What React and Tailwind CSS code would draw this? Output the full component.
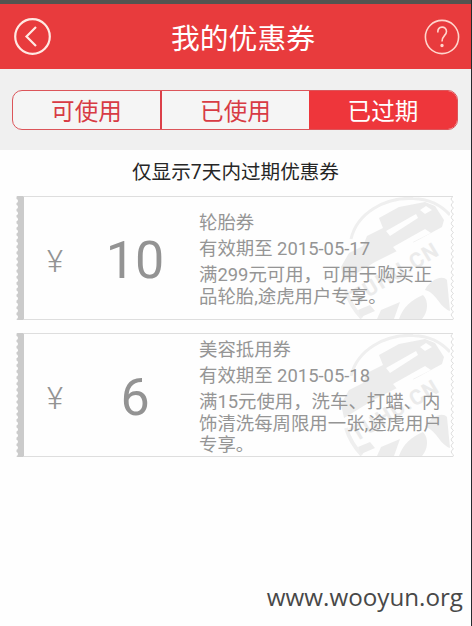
import React from 'react';

const sans = "font-['Roboto','Noto_Sans_CJK_SC',sans-serif]";

function Stamp() {
  return (
    <svg className="absolute right-[4px] top-0 h-[122px] w-[115px]" viewBox="335 198 115 122">
      <g fill="none" stroke="#efefef">
        <path d="M350 240 C356 214 384 198 412 199.5 C428 200 440 206 449 216" strokeWidth="3" />
        <path d="M345 292 Q350 308 361 319" strokeWidth="4" />
      </g>
      <g fill="#ececec">
        <path d="M378 219 L398 208 L424 203 L434 207 L443 221 L441 228 L419 240 L400 250 L374 263 L343 282 L340 268 L348 254 L362 247 L366 237 L382 229Z" />
        <path d="M424 291 C428 282 441 275 446 281 L449 312 C438 308 436 294 424 291Z" />
        <path d="M398 320 C402 308 410 301 422 296 C428 302 427 313 421 320Z" />
        <path d="M376 320 L380 311 L399 303 L393 320Z" />
        <path d="M357 311 L369 306 L374 312 L360 318Z" />
      </g>
      <path d="M385 232 L415 215 L417 219 L389 237ZM392 248 L424 230 L430 234 L412 243 L415 247 L397 254ZM419 211 L425 207 L431 211 L424 215Z" fill="#fefefe" />
      <text transform="translate(355 306) rotate(-31)" fill="#ebebeb" fontSize="21" fontWeight="700" className="font-['Roboto',sans-serif]" textLength="98">TUHU.CN</text>
    </svg>
  );
}

function LeftEdge() {
  return (
    <svg className="h-full w-2 shrink-0" viewBox="0 0 8 124">
      <rect x="0.5" width="7.5" height="124" rx="1" fill="#cbcbcb" />
      {Array.from({ length: 20 }, (_, i) => (
        <circle key={i} cx="0" cy={5 + i * 6.1} r="2" fill="#fff" />
      ))}
    </svg>
  );
}

function RightEdge() {
  return (
    <svg className="absolute right-0 top-0 h-full w-[6px]" viewBox="0 0 6 124">
      <rect x="1" width="5" height="124" fill="#fff" />
      <path
        d={'M0 .5 H4 ' + Array.from({ length: 20 }, (_, i) => `Q0 ${3 + i * 6.1} 4.5 ${6 + i * 6.1}`).join(' ') + ' L4 123.5 H0'}
        fill="none"
        stroke="#dedede"
      />
    </svg>
  );
}

function Coupon({ amount, title, date, lines }) {
  return (
    <article className="relative flex h-[124px] w-[439px]">
      <LeftEdge />
      <div className="relative flex flex-1 border-y border-[#dedede]">
        <Stamp />
        <div className="relative flex w-[175px] items-center pt-[6px] text-[#939393]">
          <span className="ml-[18px] w-[26px] pt-[3px] text-center text-[31px] font-light">¥</span>
          <span className="ml-[17px] w-[100px] text-center text-[52px] leading-none">{amount}</span>
        </div>
        <div className={`relative whitespace-nowrap text-[18.4px] text-[#959595] ${lines.length > 2 ? 'pt-[3px]' : 'pt-[13px]'}`}>
          <h2 className="h-[26px] leading-[26px]">{title}</h2>
          <p className="h-[26px] leading-[26px]">{date}</p>
          {lines.map((l) => (
            <p key={l} className="h-[21.5px] leading-[25px]">{l}</p>
          ))}
        </div>
      </div>
      <RightEdge />
    </article>
  );
}

export default function App() {
  return (
    <div className={`flex h-[626px] w-[472px] flex-col overflow-hidden border-r border-[#252b2e] bg-[#fefefe] ${sans}`}>
      <div className="h-1 shrink-0 bg-[#525450]" />
      <header className="flex h-[65px] shrink-0 items-center bg-[#e83b3d] pl-[14px] pr-[11px] text-white">
        <svg className="size-[37px]" viewBox="0 0 37 37" fill="none" stroke="#ffe9e3" strokeWidth="2.2">
          <circle cx="18.5" cy="18.5" r="17.3" />
          <path d="M22 9 L12.5 18.5 L22 28" />
        </svg>
        <h1 className="ml-[120px] pt-[4px] text-[28.8px] leading-[40px]">我的优惠券</h1>
        <svg className="ml-auto size-[36px]" viewBox="0 0 36 36" fill="none" stroke="#ffd5cc" strokeWidth="1.6">
          <circle cx="18" cy="18" r="16.6" />
          <path d="M13.8 13.5 C13.5 6.5 22.5 6.5 22.5 12.5 C22.5 16.5 18 16.5 18 22.5" />
          <circle cx="18" cy="26.5" r="0.9" fill="#ffd5cc" />
        </svg>
      </header>
      <div className="h-[81px] shrink-0 bg-[#f0f0f0] pl-3 pt-[21px]">
        <nav className="flex h-10 w-[446px] overflow-hidden rounded-[10px] border border-[#dc555a] bg-[#f5f5f5] text-[23.6px] leading-[42px] text-[#d83b44]">
          <button className="w-[149px] border-r-2 border-[#dc4049]">可使用</button>
          <button className="w-[147px]">已使用</button>
          <button className="flex-1 bg-[#ee363b] text-white">已过期</button>
        </nav>
      </div>
      <p className="h-[46px] shrink-0 text-center text-[19.6px] leading-[45px] text-[#262626]">仅显示7天内过期优惠券</p>
      <main className="flex flex-1 flex-col gap-[13px] pl-4">
        <Coupon amount="10" title="轮胎券" date="有效期至 2015-05-17" lines={['满299元可用，可用于购买正', '品轮胎,途虎用户专享。']} />
        <Coupon amount="6" title="美容抵用券" date="有效期至 2015-05-18" lines={['满15元使用，洗车、打蜡、内', '饰清洗每周限用一张,途虎用户', '专享。']} />
      </main>
      <footer className="h-[46px] shrink-0 pr-[8px] text-right font-['Open_Sans',sans-serif] text-[24.2px] leading-[34px] text-[#484848]">www.wooyun.org</footer>
    </div>
  );
}
